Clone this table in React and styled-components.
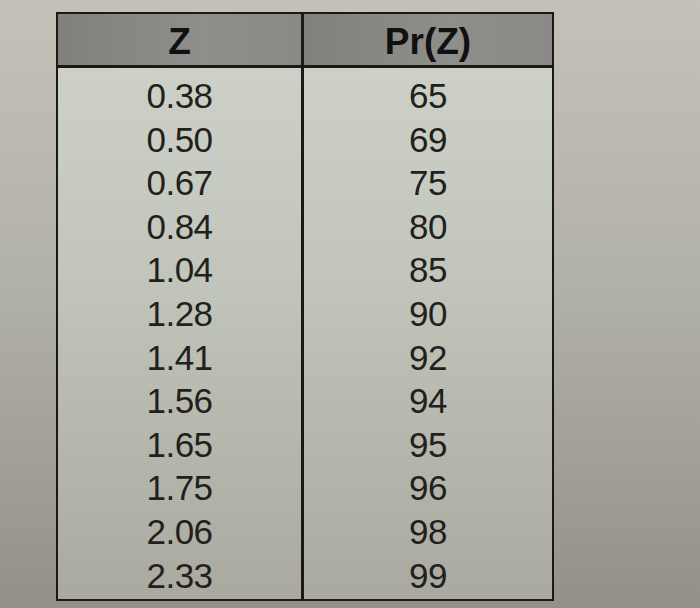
import React from "react";
import styled, { createGlobalStyle } from "styled-components";

const rows = [
  ["0.38", "65"],
  ["0.50", "69"],
  ["0.67", "75"],
  ["0.84", "80"],
  ["1.04", "85"],
  ["1.28", "90"],
  ["1.41", "92"],
  ["1.56", "94"],
  ["1.65", "95"],
  ["1.75", "96"],
  ["2.06", "98"],
  ["2.33", "99"],
];

const GlobalStyle = createGlobalStyle`
  html, body {
    margin: 0;
    padding: 0;
  }
  body {
    font-family: "Liberation Sans", Arial, sans-serif;
  }
`;

const Page = styled.div`
  width: 700px;
  height: 608px;
  overflow: hidden;
  box-sizing: border-box;
  padding: 12px 0 0 56px;
  background: linear-gradient(180deg, #c4c1b8 0%, #b3b2a8 45%, #939089 100%);
`;

const Table = styled.div`
  width: 498px;
  height: 589px;
  box-sizing: border-box;
  border: 2px solid #1d1816;
  display: grid;
  grid-template-columns: 243px 1fr;
  grid-template-rows: 54px 1fr;
  background: linear-gradient(180deg, #d0d3ca 0%, #c2c5bb 45%, #a9a99f 100%);
`;

const HeadCell = styled.div`
  display: flex;
  align-items: center;
  justify-content: center;
  background: linear-gradient(90deg, #80807d 0%, #8e8e8a 60%, #898985 100%);
  border-bottom: 3px solid #1d1816;
  border-left: ${(p) => (p.divider ? "3px solid #1d1816" : "none")};
  font-weight: 700;
  font-size: 37px;
  color: #121010;
  padding-top: 4px;
`;

const Column = styled.div`
  display: flex;
  flex-direction: column;
  align-items: center;
  padding-top: 6px;
  border-left: ${(p) => (p.divider ? "3px solid #1d1816" : "none")};
`;

const Value = styled.div`
  height: 43.6px;
  line-height: 43.6px;
  font-size: 35px;
  color: #221f1c;
  letter-spacing: -0.5px;
`;

export default function App() {
  return (
    <>
      <GlobalStyle />
      <Page>
        <Table>
          <HeadCell>Z</HeadCell>
          <HeadCell divider>Pr(Z)</HeadCell>
          <Column>
            {rows.map(([z]) => (
              <Value key={z}>{z}</Value>
            ))}
          </Column>
          <Column divider>
            {rows.map(([z, p]) => (
              <Value key={z}>{p}</Value>
            ))}
          </Column>
        </Table>
      </Page>
    </>
  );
}
